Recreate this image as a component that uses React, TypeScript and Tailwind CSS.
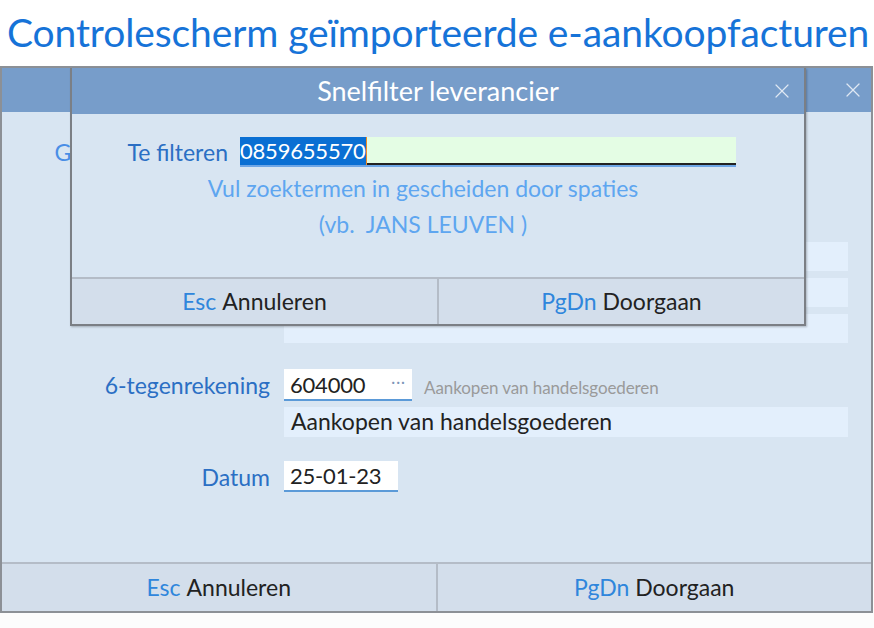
import { X } from "lucide-react";

function FooterButtons({ className }: { className?: string }) {
  return (
    <div className={`flex text-[23px] ${className ?? ""}`}>
      <button className="flex-1 flex items-center justify-center">
        <span className="text-[#2f86dc]">Esc</span>
        <span className="ml-[6px] text-[#222]">Annuleren</span>
      </button>
      <div className="w-[2px] bg-[#b4bcc7]" />
      <button className="flex-1 flex items-center justify-center">
        <span className="text-[#2f86dc]">PgDn</span>
        <span className="ml-[6px] text-[#222]">Doorgaan</span>
      </button>
    </div>
  );
}

function FilterDialog() {
  return (
    <div className="absolute left-[68px] top-0 w-[736px] h-[258px] border-2 border-t-0 border-[#7b7f85] bg-[#d8e5f2] flex flex-col shadow-[1px_1px_2px_rgba(0,0,0,0.25)]">
      <div className="h-[46px] shrink-0 bg-[#779dca] relative flex items-center justify-center">
        <span className="text-white text-[27px]">Snelfilter leverancier</span>
        <X className="absolute right-[10px] top-[11px] w-[24px] h-[24px] text-[#dfe8f3]" strokeWidth={1.2} />
      </div>
      <div className="flex-1 flex flex-col">
        <div className="flex items-center mt-[21px]">
          <span className="w-[168px] text-right pr-[12px] text-[23px] text-[#2b6fc4] whitespace-nowrap">Te filteren</span>
          <div className="w-[496px] h-[30px] bg-[#e4fde4] flex border-b-[2px] border-[#6ea6e6]">
            <span className="bg-[#0a6fd3] text-white text-[22px] leading-[28px] h-[28px] tracking-[-0.2px]">0859655570</span>
            <div className="w-[1px] bg-[#f08a24] h-[28px]" />
            <div className="flex-1 h-[28px] border-b-[2px] border-[#222]" />
          </div>
        </div>
        <div className="mt-[1px] text-center text-[23px] text-[#5ea6f0] pr-[30px]">Vul zoektermen in gescheiden door spaties</div>
        <div className="mt-[2px] text-center text-[23px] text-[#5ea6f0] pr-[30px] whitespace-pre">(vb.  JANS LEUVEN )</div>
      </div>
      <FooterButtons className="h-[47px] shrink-0 border-t-2 border-[#b4bcc7] bg-[#d3deeb]" />
    </div>
  );
}

export default function App() {
  return (
    <div className="w-[874px] h-[628px] bg-[#fcfcfc] font-['Lato',sans-serif] overflow-hidden">
      <div className="h-[66px] bg-white flex items-center pl-[7px] pb-[2px]">
        <h1 className="text-[39px] text-[#1673d8] tracking-[-0.1px] whitespace-nowrap">Controlescherm geïmporteerde e-aankoopfacturen</h1>
      </div>
      <div className="relative w-[873px] border-2 border-[#8c9096]">
        <div className="h-[44px] bg-[#779dca] flex items-center justify-end pr-[6px]">
          <X className="w-[24px] h-[24px] text-[#dfe8f3]" strokeWidth={1.2} />
        </div>
        <div className="h-[450px] bg-[#d8e5f2] flex flex-col">
          <div className="flex items-center mt-[26px] h-[28px]">
            <span className="w-[282px] text-right pr-[14px] text-[23px] text-[#4a8ee6] whitespace-nowrap tracking-[0.6px]">Gekozen leverancier</span>
          </div>
          <div className="flex mt-[76px] pl-[282px]">
            <div className="w-[564px] h-[29px] bg-[#e3effc]" />
          </div>
          <div className="flex mt-[7px] pl-[282px]">
            <div className="w-[564px] h-[29px] bg-[#e3effc]" />
          </div>
          <div className="flex mt-[7px] pl-[282px]">
            <div className="w-[564px] h-[29px] bg-[#e3effc]" />
          </div>
          <div className="flex items-center mt-[25px]">
            <span className="w-[282px] text-right pr-[14px] text-[23px] text-[#2b6fc4]">6-tegenrekening</span>
            <div className="w-[128px] h-[32px] bg-white border-b-2 border-[#5b9ad8] flex items-center px-[6px]">
              <span className="text-[22px] text-[#222] flex-1 tracking-[-0.2px]">604000</span>
              <span className="text-[15px] text-[#7c95b8] tracking-[1px] pb-[6px]">···</span>
            </div>
            <span className="ml-[12px] text-[17px] text-[#9a9a9a] pt-[4px] tracking-[-0.1px]">Aankopen van handelsgoederen</span>
          </div>
          <div className="flex mt-[4px] pl-[282px]">
            <div className="w-[564px] h-[30px] bg-[#e3effc] flex items-center px-[7px] text-[23px] text-[#222]">Aankopen van handelsgoederen</div>
          </div>
          <div className="flex items-center mt-[23px]">
            <span className="w-[282px] text-right pr-[14px] text-[23px] text-[#2b6fc4]">Datum</span>
            <div className="w-[114px] h-[31px] bg-white border-b-2 border-[#5b9ad8] flex items-center px-[6px]">
              <span className="text-[22px] text-[#222] tracking-[-0.2px]">25-01-23</span>
            </div>
          </div>
        </div>
        <FooterButtons className="h-[49px] border-t-2 border-[#b4bcc7] bg-[#d3deeb]" />
        <FilterDialog />
      </div>
    </div>
  );
}
